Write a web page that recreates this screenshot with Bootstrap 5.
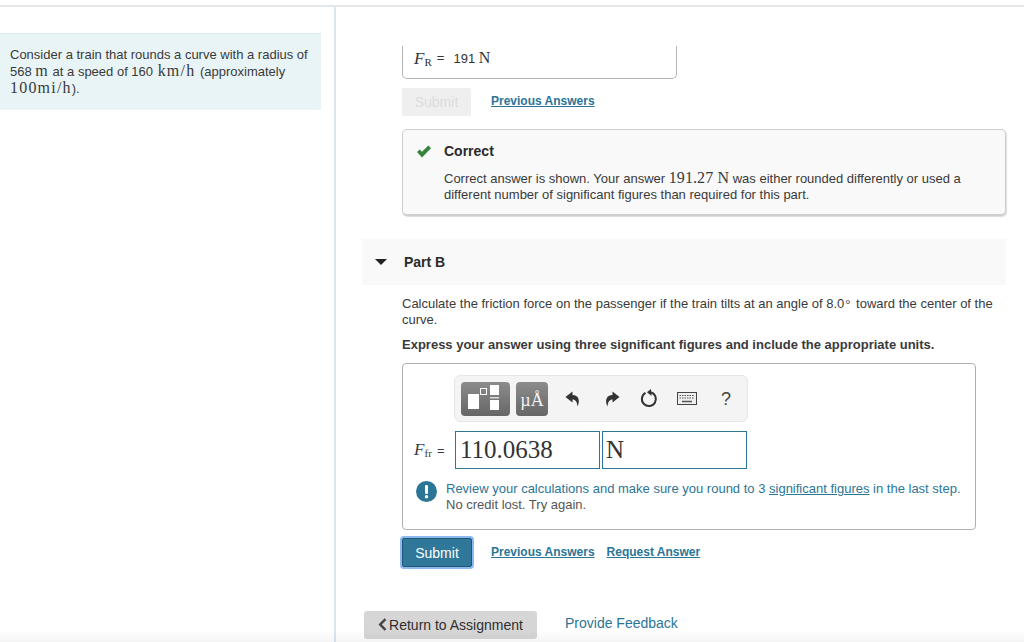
<!DOCTYPE html>
<html lang="en">

<head>
    <meta charset="UTF-8">
    <meta name="viewport" content="width=device-width, initial-scale=1.0">
    <title>Part B</title>
    <link href="https://cdn.jsdelivr.net/npm/bootstrap@5.3.0/dist/css/bootstrap.min.css" rel="stylesheet">
    <style>
        html, body {
            height: 642px;
            overflow: hidden;
        }

        body {
            font-family: "Liberation Sans", Arial, sans-serif;
            font-size: 13px;
            line-height: 16px;
            color: #3a3a3a;
            background: #fff;
        }

        .top-rule {
            height: 7px;
            border-bottom: 2px solid #e4e7ea;
        }

        .page-cols {
            height: 635px;
        }

        .left-col {
            width: 336px;
            flex: none;
            border-right: 2px solid #dde5f0;
            padding-top: 26px;
        }

        .intro-box {
            width: 321px;
            height: 77px;
            padding: 13px 10px 0;
            background: #e9f4f7;
            border-top: 1px solid #dfe9ec;
        }

        .right-col {
            flex: 1 1 auto;
            min-width: 0;
            padding: 39px 18px 0 26px;
        }

        .tex {
            font-family: "Liberation Serif", "Times New Roman", serif;
            font-size: 16px;
            line-height: 1;
            letter-spacing: .1px;
        }

        .tex.wide {
            letter-spacing: 1.2px;
        }

        .tex.spaced {
            margin: 0 1px;
        }

        .tex i {
            font-size: 17px;
            letter-spacing: 0;
        }

        .tex sub {
            font-size: 11px;
            bottom: -2px;
            top: auto;
            line-height: 0;
            vertical-align: baseline;
            position: relative;
        }

        .ans-top {
            width: 275px;
            height: 33px;
            margin-left: 40px;
            padding: 4px 11px;
            border: 1px solid #b5b5b5;
            border-top: 0;
            border-radius: 0 0 5px 5px;
            color: #333;
        }

        .eq-sign {
            margin: 0 9px 0 5px;
        }

        .action-row {
            margin-left: 40px;
            margin-top: 9px;
            gap: 12px;
        }

        .btn-submit {
            width: 69px;
            height: 28px;
            padding: 0;
            margin-right: 8px;
            font-size: 14px;
            line-height: 26px;
            border-radius: 2px;
        }

        .btn-submit.off {
            background: #efefef;
            border-color: #efefef;
            color: #dcdcdc;
            opacity: 1;
        }

        .btn-submit.live {
            width: 70px;
            height: 29px;
            margin-right: 7px;
            background: #2f7899;
            border: 1px solid #1f5873;
            color: #fff;
            box-shadow: 0 0 0 2px #8db9f2;
        }

        .ans-link {
            margin-bottom: 2px;
            font-size: 12px;
            font-weight: 700;
            color: #2b7597;
            text-decoration: underline;
        }

        .correct-box {
            height: 87px;
            margin: 13px 0 0 40px;
            padding: 13px 0 0 41px;
            background: #f9f9f9;
            border: 1px solid #cfcfcf;
            border-bottom-width: 2px;
            border-radius: 5px;
            box-shadow: 1px 1px 1px #ddd;
        }

        .correct-box .tick {
            position: absolute;
            left: 13px;
            top: 15px;
        }

        .correct-title {
            font-size: 14px;
            font-weight: 700;
            color: #2a2a2a;
            margin-bottom: 11px;
        }

        .part-bar {
            height: 46px;
            margin-top: 23px;
            padding-left: 13px;
            background: #f9f9f9;
            font-size: 14px;
            font-weight: 700;
            color: #2a2a2a;
        }

        .part-arrow {
            width: 0;
            height: 0;
            margin-right: 17px;
            border-left: 6px solid transparent;
            border-right: 6px solid transparent;
            border-top: 6px solid #222;
        }

        .part-body {
            margin-left: 40px;
        }

        .question {
            margin: 11px 0 0;
        }

        .degree {
            font-family: "Liberation Serif", serif;
            margin: 0 2px 0 1px;
        }

        .instruct {
            margin: 9px 0 0;
            font-weight: 700;
        }

        .ans-box {
            width: 574px;
            height: 167px;
            margin-top: 10px;
            padding: 11px 11px 0;
            border: 1px solid #b0b0b0;
            border-radius: 4px;
        }

        .tool-strip {
            width: 294px;
            height: 47px;
            margin-left: 40px;
            padding: 5px 6px;
            background: #f4f4f4;
            border: 1px solid #e6e6e6;
            border-radius: 6px;
        }

        .tool-btn {
            height: 34px;
            flex: none;
            border-radius: 4px;
            background: linear-gradient(#8c8c8c, #666);
        }

        .tool-btn.tpl {
            width: 49px;
            margin-right: 6px;
        }

        .tool-btn.units {
            width: 32px;
            color: #f2f2f2;
            font-family: "Liberation Serif", serif;
            font-size: 18px;
            line-height: 36px;
            text-align: center;
        }

        .tool-icons {
            flex: 1 1 auto;
            padding-left: 17px;
        }

        .ico-redo {
            margin-left: 23px;
        }

        .ico-reset {
            margin-left: 20px;
        }

        .ico-keys {
            margin-left: 19px;
        }

        .help-mark {
            margin-left: 24px;
            font-size: 18px;
            color: #444;
        }

        .field-row {
            margin-top: 9px;
        }

        .field-label {
            width: 41px;
            flex: none;
        }

        .field-label .eq-sign {
            margin: 0 0 0 5px;
        }

        .val-input {
            height: 38px;
            border: 1px solid #2b7597;
            padding: 0 4px;
            font-family: "Liberation Serif", serif;
            font-size: 25px;
            line-height: 36px;
            color: #333;
        }

        .val-input.num {
            width: 145px;
            margin-right: 2px;
        }

        .val-input.unit {
            width: 145px;
            padding-left: 3px;
        }

        .review {
            margin: 12px 0 0 2px;
            gap: 9px;
        }

        .review-text {
            color: #2b7597;
        }

        .review-text a {
            color: #2b7597;
        }

        .review-sub {
            color: #555;
        }

        .final-row {
            margin: 8px 0 0;
        }

        .page-foot {
            margin: 44px 0 0 2px;
        }

        .btn-return {
            width: 173px;
            height: 28px;
            padding: 0;
            background: #d6d6d6;
            border: 0;
            border-radius: 3px;
            font-size: 14px;
            line-height: 28px;
            color: #2f2f2f;
        }

        .btn-return svg {
            margin-right: 2px;
            vertical-align: -1px;
        }

        .feedback-link {
            margin-left: 28px;
            margin-bottom: 4px;
            font-size: 14px;
            color: #2b7597;
            text-decoration: none;
        }

        /* faint fade along the bottom edge of the window */
        .bottom-fade {
            position: fixed;
            left: 0;
            right: 0;
            bottom: 0;
            height: 12px;
            background: linear-gradient(rgba(0, 0, 0, 0), rgba(0, 0, 0, .04));
            pointer-events: none;
        }
    </style>
</head>

<body>
    <div class="top-rule"></div>

    <div class="page-cols d-flex">
        <div class="left-col">
            <div class="intro-box">
                Consider a train that rounds a curve with a radius of
                568 <span class="tex wide">m</span> at a speed of 160 <span class="tex wide spaced">km/h</span> (approximately
                <span class="tex wide">100mi/h</span>).
            </div>
        </div>

        <div class="right-col">
            <div class="ans-top d-flex align-items-start">
                <span class="tex"><i>F</i><sub>R</sub></span>
                <span class="eq-sign">=</span>
                <span>191&nbsp;<span class="tex">N</span></span>
            </div>

            <div class="action-row d-flex align-items-center">
                <button class="btn btn-submit off" disabled>Submit</button>
                <a class="ans-link" href="#">Previous Answers</a>
            </div>

            <div class="correct-box position-relative">
                <svg class="tick" width="16" height="14" viewBox="0 0 16 14">
                    <path d="M1 7 L3.7 4.4 L6 6.7 L12.3 .6 L15 3.2 L6 12.4 Z" fill="#35843c" />
                </svg>
                <div class="correct-title">Correct</div>
                <div>Correct answer is shown. Your answer <span class="tex">191.27&nbsp;N</span> was either rounded differently or used a<br>different number of significant figures than required for this part.</div>
            </div>

            <div class="part-bar d-flex align-items-center">
                <span class="part-arrow"></span>
                <span>Part B</span>
            </div>

            <div class="part-body">
                <p class="question">Calculate the friction force on the passenger if the train tilts at an angle of 8.0<span class="degree">&deg;</span> toward the center of the curve.</p>
                <p class="instruct">Express your answer using three significant figures and include the appropriate units.</p>

                <div class="ans-box">
                    <div class="tool-strip d-flex align-items-center">
                        <div class="tool-btn tpl">
                            <svg width="49" height="34" viewBox="0 0 49 34">
                                <rect x="7" y="12" width="11" height="15" fill="#fff" />
                                <rect x="19.5" y="6.5" width="6" height="6" fill="none" stroke="#fff" />
                                <rect x="29" y="3" width="9" height="10" fill="#fff" />
                                <rect x="29" y="15" width="9" height="1.5" fill="#ddd" />
                                <rect x="29" y="18" width="9" height="10" fill="#fff" />
                            </svg>
                        </div>
                        <div class="tool-btn units">&micro;&Aring;</div>
                        <div class="tool-icons d-flex align-items-center">
                            <svg width="16" height="16" viewBox="0 0 16 16">
                                <path d="M7.5 0.5 L0.5 6 L7.5 11.5 V8.5 C10.5 8.5 12 10.5 12.5 15.5 C15.5 9.5 13.5 4 7.5 4 Z" fill="#333" />
                            </svg>
                            <svg class="ico-redo" width="16" height="16" viewBox="0 0 16 16">
                                <path d="M8.5 0.5 L15.5 6 L8.5 11.5 V8.5 C5.5 8.5 4 10.5 3.5 15.5 C0.5 9.5 2.5 4 8.5 4 Z" fill="#333" />
                            </svg>
                            <svg class="ico-reset" width="18" height="19" viewBox="0 0 18 19">
                                <path d="M5.5 3.9 A7 7 0 1 0 10.5 3.2" fill="none" stroke="#333" stroke-width="2" />
                                <path d="M7 3.2 L11 0 L11.5 7 Z" fill="#333" />
                            </svg>
                            <svg class="ico-keys" width="20" height="13" viewBox="0 0 20 13">
                                <rect x="0.5" y="0.5" width="19" height="12" fill="#eee" stroke="#444" />
                                <path d="M2.5 3.5 H17.5 M2.5 6 H17.5" stroke="#555" stroke-dasharray="1.5 1" />
                                <path d="M5 9.5 H15" stroke="#555" stroke-width="1.5" />
                            </svg>
                            <span class="help-mark">?</span>
                        </div>
                    </div>

                    <div class="field-row d-flex align-items-center">
                        <div class="field-label"><span class="tex"><i>F</i><sub>fr</sub></span><span class="eq-sign">=</span></div>
                        <div class="val-input num">110.0638</div>
                        <div class="val-input unit">N</div>
                    </div>

                    <div class="review d-flex">
                        <svg class="flex-none" width="21" height="21" viewBox="0 0 21 21">
                            <circle cx="10.5" cy="10.5" r="10.5" fill="#2b7597" />
                            <rect x="9" y="4" width="3" height="9" rx="1.2" fill="#fff" />
                            <circle cx="10.5" cy="15.7" r="1.7" fill="#fff" />
                        </svg>
                        <div>
                            <div class="review-text">Review your calculations and make sure you round to 3 <a href="#">significant figures</a> in the last step.</div>
                            <div class="review-sub">No credit lost. Try again.</div>
                        </div>
                    </div>
                </div>

                <div class="final-row action-row d-flex align-items-center">
                    <button class="btn btn-submit live">Submit</button>
                    <a class="ans-link" href="#">Previous Answers</a>
                    <a class="ans-link" href="#">Request Answer</a>
                </div>
            </div>

            <div class="page-foot d-flex align-items-center">
                <button class="btn btn-return"><svg width="9" height="13" viewBox="0 0 9 13"><path d="M7.5 1.2 L2.2 6.5 L7.5 11.8" fill="none" stroke="#444" stroke-width="2.4" /></svg>Return to Assignment</button>
                <a class="feedback-link" href="#">Provide Feedback</a>
            </div>
        </div>
    </div>

    <div class="bottom-fade"></div>

    <script src="https://cdn.jsdelivr.net/npm/bootstrap@5.3.0/dist/js/bootstrap.bundle.min.js"></script>
</body>

</html>
